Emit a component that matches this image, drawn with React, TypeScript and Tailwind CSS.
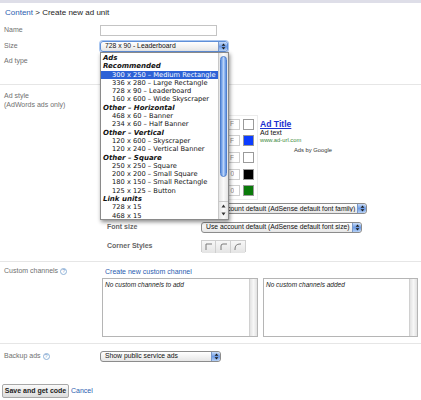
import React from "react";

const items: [string, string][] = [
  ["h", "Ads"],
  ["h", "Recommended"],
  ["s", "300 x 250 – Medium Rectangle"],
  ["i", "336 x 280 – Large Rectangle"],
  ["i", "728 x 90 – Leaderboard"],
  ["i", "160 x 600 – Wide Skyscraper"],
  ["h", "Other – Horizontal"],
  ["i", "468 x 60 – Banner"],
  ["i", "234 x 60 – Half Banner"],
  ["h", "Other – Vertical"],
  ["i", "120 x 600 – Skyscraper"],
  ["i", "120 x 240 – Vertical Banner"],
  ["h", "Other – Square"],
  ["i", "250 x 250 – Square"],
  ["i", "200 x 200 – Small Square"],
  ["i", "180 x 150 – Small Rectangle"],
  ["i", "125 x 125 – Button"],
  ["h", "Link units"],
  ["i", "728 x 15"],
  ["i", "468 x 15"],
];

function Stepper() {
  return (
    <span className="flex h-full w-[9px] shrink-0 items-center justify-center rounded-r-[3px] border-l border-[#7a98c8] bg-gradient-to-b from-[#c9dcf7] via-[#6f9de6] to-[#b4d0f6]">
      <svg width="5" height="7" viewBox="0 0 5 7">
        <path d="M2.5 0.6 L4.4 2.8 H0.6Z M2.5 6.4 L4.4 4.2 H0.6Z" fill="#1a1a1a" />
      </svg>
    </span>
  );
}

function Select({ cls, text, focus }: { cls: string; text: string; focus?: boolean }) {
  return (
    <div
      className={`flex h-[11px] items-center rounded-[3px] border bg-gradient-to-b from-white to-[#e6e6e6] ${
        focus ? "border-[#5f8fd8] shadow-[0_0_0_1px_#a9c6f0]" : "border-[#8c8c8c]"
      } ${cls}`}
    >
      <span className="flex-1 truncate pl-[4px] text-[6.8px] leading-none text-[#111]">{text}</span>
      <Stepper />
    </div>
  );
}

function Help() {
  return (
    <span className="ml-[2px] inline-flex h-[7px] w-[7px] items-center justify-center rounded-full border border-[#8fb2d8] text-[5px] leading-none text-[#6f98c8]">
      ?
    </span>
  );
}

function ColorRow({ tail, color }: { tail: string; color: string }) {
  return (
    <div className="flex h-[16.6px] items-center">
      <span className="w-[94px]" />
      <div className="flex h-[11px] w-[39px] items-center justify-end border border-[#cfcfcf] bg-white pr-[5px]">
        <span className="flex w-[4px] justify-end overflow-hidden whitespace-nowrap text-[6.5px] text-[#8a8a8a]">{tail}</span>
      </div>
      <div className={`ml-[3px] h-[11px] w-[11px] border border-[#9a9a9a] ${color}`} />
    </div>
  );
}

function Corner({ r }: { r: number }) {
  return (
    <div className="flex h-[12px] w-[14.6px] items-center justify-center border-r border-[#cfcfcf] last:border-r-0 bg-gradient-to-b from-[#f7f7f7] to-[#e4e4e4]">
      <svg width="7" height="7" viewBox="0 0 7 7">
        <path d={r === 0 ? "M1 7 V1 H7" : r === 1 ? "M1 7 V3 Q1 1 3 1 H7" : "M1 7 V6 Q1 1 6 1 H7"} fill="none" stroke="#7a7a7a" strokeWidth="1" />
      </svg>
    </div>
  );
}

export default function App() {
  return (
    <div className="relative h-[400px] w-[421px] overflow-hidden bg-white font-['Liberation_Sans',Arial,sans-serif]">
      <div className="h-[3px] bg-[#dedee8]" />
      {/* breadcrumb */}
      <div className="flex h-[19px] items-center pl-[5px] text-[8px] text-[#222]">
        <span className="text-[#2a5db0]">Content</span>
        <span>&nbsp;&gt; Create new ad unit</span>
      </div>
      {/* name */}
      <div className="flex h-[16px] items-center">
        <span className="w-[100px] pl-[4px] text-[7px] text-[#707070]">Name</span>
        <div className="h-[11px] w-[117px] border border-[#c4c4c4] bg-white" />
      </div>
      {/* size */}
      <div className="flex h-[16px] items-center">
        <span className="w-[100px] pl-[4px] text-[7px] text-[#707070]">Size</span>
        <Select cls="w-[128px]" text="728 x 90 - Leaderboard" focus />
      </div>
      {/* ad type */}
      <div className="h-[30px] pl-[4px] pt-[3px] text-[7px] leading-[8px] text-[#707070]">Ad type</div>
      <div className="h-px bg-[#e6e6e6]" />
      {/* ad style */}
      <div className="flex h-[176px]">
        <div className="w-[100px] pl-[4px] pt-[7px] text-[7px] leading-[8.5px] text-[#707070]">
          <div>Ad style</div>
          <div>(AdWords ads only)</div>
        </div>
        <div className="flex flex-col pt-[30px]">
          <div className="flex">
            <div className="w-[158px] border-y border-r border-[#ececec] pl-[7px]">
              <ColorRow tail="F" color="bg-white" />
              <ColorRow tail="F" color="bg-[#0b3cff]" />
              <ColorRow tail="F" color="bg-white" />
              <ColorRow tail="0" color="bg-black" />
              <ColorRow tail="0" color="bg-[#0a7a0a]" />
            </div>
            <div className="flex w-[80px] flex-col pl-[2px] pt-[4px]">
              <span className="text-[8.6px] font-bold leading-[10px] text-[#1b2fd0] underline">Ad Title</span>
              <span className="text-[7px] leading-[8px] text-[#111]">Ad text</span>
              <span className="text-[5.8px] leading-[7px] text-[#3b8a3b]">www.ad-url.com</span>
              <span className="mt-[3px] self-end pr-[6px] text-[5.8px] leading-[7px] text-[#333]">Ads by Google</span>
            </div>
          </div>
          <div className="flex h-[18px] items-center pl-[7px]">
            <span className="w-[94px]" />
            <Select cls="w-[166px]" text="Use account default (AdSense default font family)" />
          </div>
          <div className="flex h-[19px] items-center pl-[7px]">
            <span className="w-[94px] font-bold text-[7px] text-[#666]">Font size</span>
            <Select cls="w-[161px]" text="Use account default (AdSense default font size)" />
          </div>
          <div className="flex h-[18px] items-center pl-[7px]">
            <span className="w-[94px] font-bold text-[7px] text-[#666]">Corner Styles</span>
            <div className="flex h-[12px] w-[45px] border border-[#cfcfcf]">
              <Corner r={0} />
              <Corner r={1} />
              <Corner r={2} />
            </div>
          </div>
        </div>
      </div>
      <div className="h-px bg-[#e6e6e6]" />
      {/* custom channels */}
      <div className="flex h-[81px]">
        <div className="flex h-[18px] w-[100px] items-center pl-[4px] text-[7px] text-[#707070]">
          Custom channels
          <Help />
        </div>
        <div className="flex flex-col pt-[6px]">
          <span className="pl-[5px] text-[7px] leading-[8px] text-[#2a5db0]">Create new custom channel</span>
          <div className="ml-[2px] mt-[2px] flex gap-[5px]">
            <div className="flex h-[59px] w-[156px] border border-[#b5b5b5] bg-white">
              <span className="flex-1 pl-[2px] pt-[2px] text-[6.5px] italic leading-[8px] text-[#222]">No custom channels to add</span>
              <div className="w-[8px] border-l border-[#d0d0d0] bg-gradient-to-r from-[#e2e2e2] via-[#f7f7f7] to-[#e2e2e2]" />
            </div>
            <div className="flex h-[59px] w-[155px] border border-[#b5b5b5] bg-white">
              <span className="flex-1 pl-[2px] pt-[2px] text-[6.5px] italic leading-[8px] text-[#222]">No custom channels added</span>
              <div className="w-[8px] border-l border-[#d0d0d0] bg-gradient-to-r from-[#e2e2e2] via-[#f7f7f7] to-[#e2e2e2]" />
            </div>
          </div>
        </div>
      </div>
      <div className="h-px bg-[#e6e6e6]" />
      {/* backup ads */}
      <div className="flex h-[40px] pt-[7px]">
        <div className="flex h-[11px] w-[100px] items-center pl-[4px] text-[7px] text-[#707070]">
          Backup ads
          <Help />
        </div>
        <Select cls="w-[121px]" text="Show public service ads" />
      </div>
      {/* buttons */}
      <div className="flex items-center pl-[2px]">
        <div className="flex h-[14px] w-[67px] items-center justify-center rounded-[2px] border border-[#a8a8a8] bg-gradient-to-b from-[#fafafa] to-[#dcdcdc] text-[7px] font-bold text-[#222]">
          Save and get code
        </div>
        <span className="ml-[2px] text-[7px] text-[#2a5db0]">Cancel</span>
      </div>

      {/* open dropdown */}
      <div className="absolute left-[100px] top-[52px] flex h-[168px] w-[129px] border border-[#8a8a8a] bg-white shadow-[1px_2px_4px_rgba(0,0,0,0.45)]">
        <div className="flex-1 pt-px font-['DejaVu_Sans',sans-serif] text-[6.7px] text-[#111]">
          {items.map(([k, t], i) => (
            <div
              key={i}
              className={
                k === "h"
                  ? "h-[8.3px] whitespace-nowrap pl-[2px] text-[7px] font-bold italic leading-[8.3px]"
                  : k === "s"
                  ? "h-[8.3px] whitespace-nowrap bg-[#2d62d6] pl-[11px] leading-[8.3px] text-white"
                  : "h-[8.3px] whitespace-nowrap pl-[11px] leading-[8.3px]"
              }
            >
              {t}
            </div>
          ))}
        </div>
        <div className="flex w-[10px] flex-col border-l border-[#c8c8c8] bg-gradient-to-r from-[#e4e4e4] via-[#fafafa] to-[#e4e4e4]">
          <div className="mx-[1px] mt-[3px] h-[121px] rounded-full border border-[#4f7fcc] bg-gradient-to-r from-[#5d8fe0] via-[#b9d3f8] to-[#5d8fe0]" />
          <div className="flex-1" />
          <div className="flex h-[18px] flex-col items-center justify-around border-t border-[#c8c8c8] pb-[1px]">
            <svg width="5" height="4" viewBox="0 0 5 4"><path d="M2.5 0.5 L4.5 3.5 H0.5Z" fill="#333" /></svg>
            <svg width="5" height="4" viewBox="0 0 5 4"><path d="M2.5 3.5 L4.5 0.5 H0.5Z" fill="#333" /></svg>
          </div>
        </div>
      </div>
    </div>
  );
}
